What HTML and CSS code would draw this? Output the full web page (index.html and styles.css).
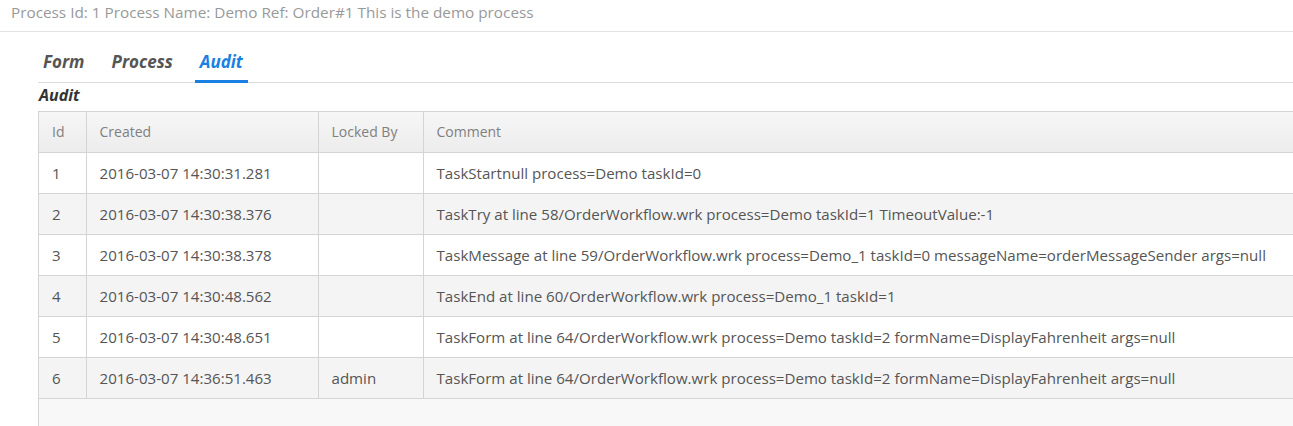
FILE: index.html
```html
<!DOCTYPE html>
<html>
<head>
<meta charset="utf-8">
<link rel="stylesheet" href="styles.css">
</head>
<body>
<div class="topbar">Process Id: 1 Process Name: Demo Ref: Order#1 This is the demo process</div>
<div class="content">
  <div class="tabs">
    <a class="tab">Form</a>
    <a class="tab">Process</a>
    <a class="tab active">Audit</a>
  </div>
  <div class="section-title">Audit</div>
  <div class="grid">
    <table class="audit">
      <thead>
        <tr><th class="c-id">Id</th><th class="c-created">Created</th><th class="c-locked">Locked By</th><th class="c-comment">Comment</th></tr>
      </thead>
      <tbody>
        <tr><td>1</td><td>2016-03-07 14:30:31.281</td><td></td><td>TaskStartnull process=Demo taskId=0</td></tr>
        <tr><td>2</td><td>2016-03-07 14:30:38.376</td><td></td><td>TaskTry at line 58/OrderWorkflow.wrk process=Demo taskId=1 TimeoutValue:-1</td></tr>
        <tr><td>3</td><td>2016-03-07 14:30:38.378</td><td></td><td>TaskMessage at line 59/OrderWorkflow.wrk process=Demo_1 taskId=0 messageName=orderMessageSender args=null</td></tr>
        <tr><td>4</td><td>2016-03-07 14:30:48.562</td><td></td><td>TaskEnd at line 60/OrderWorkflow.wrk process=Demo_1 taskId=1</td></tr>
        <tr><td>5</td><td>2016-03-07 14:30:48.651</td><td></td><td>TaskForm at line 64/OrderWorkflow.wrk process=Demo taskId=2 formName=DisplayFahrenheit args=null</td></tr>
        <tr><td>6</td><td>2016-03-07 14:36:51.463</td><td>admin</td><td>TaskForm at line 64/OrderWorkflow.wrk process=Demo taskId=2 formName=DisplayFahrenheit args=null</td></tr>
      </tbody>
    </table>
  </div>
</div>
</body>
</html>
```
FILE: styles.css
```css
html, body {
  margin: 0;
  padding: 0;
  background: #fff;
  overflow: hidden;
}
body {
  font-family: "Open Sans", "Noto Sans", sans-serif;
  color: #555;
  width: 1293px;
  height: 426px;
}
.topbar {
  height: 32px;
  box-sizing: border-box;
  padding: 2px 0 0 11px;
  font-size: 15.3px;
  line-height: 20px;
  color: #999;
  border-bottom: 1px solid #e3e3e3;
}
.content {
  margin-left: 38px;
  width: 1320px;
}
.tabs {
  display: flex;
  height: 51px;
  box-sizing: border-box;
  border-bottom: 1px solid #dcdcdc;
  align-items: stretch;
}
.tab {
  display: flex;
  align-items: center;
  padding: 10px 5px 0 5px;
  margin-right: 17px;
  font-size: 17px;
  font-weight: 700;
  font-style: italic;
  color: #555;
  border-bottom: 3px solid transparent;
  margin-bottom: -1px;
}
.tab.active {
  color: #1a7fe2;
  border-bottom-color: #1a7fe2;
}
.section-title {
  height: 28px;
  line-height: 25px;
  padding-left: 1px;
  font-size: 16px;
  font-weight: 700;
  font-style: italic;
  color: #333;
}
.grid {
  border-left: 1px solid #d4d4d4;
  border-top: 1px solid #d4d4d4;
  background: #f8f8f8;
  height: 320px;
}
.audit {
  border-collapse: collapse;
  font-size: 15.1px;
  width: 100%;
  table-layout: fixed;
}
.audit th, .audit td {
  height: 41px;
  box-sizing: border-box;
  padding: 0 13px;
  text-align: left;
  font-weight: 400;
  border-right: 1px solid #d4d4d4;
  border-bottom: 1px solid #d4d4d4;
  white-space: nowrap;
  color: #555;
}
.audit th {
  height: 40px;
  background: linear-gradient(#f6f6f6, #ececec);
  color: #808080;
  font-size: 14px;
}
.audit tbody tr:nth-child(odd) td { background: #fff; }
.audit tbody tr:nth-child(even) td { background: #f4f4f4; }
.c-id { width: 47px; }
.c-created { width: 232px; }
.c-locked { width: 105px; }
.c-comment { width: auto; }
```
